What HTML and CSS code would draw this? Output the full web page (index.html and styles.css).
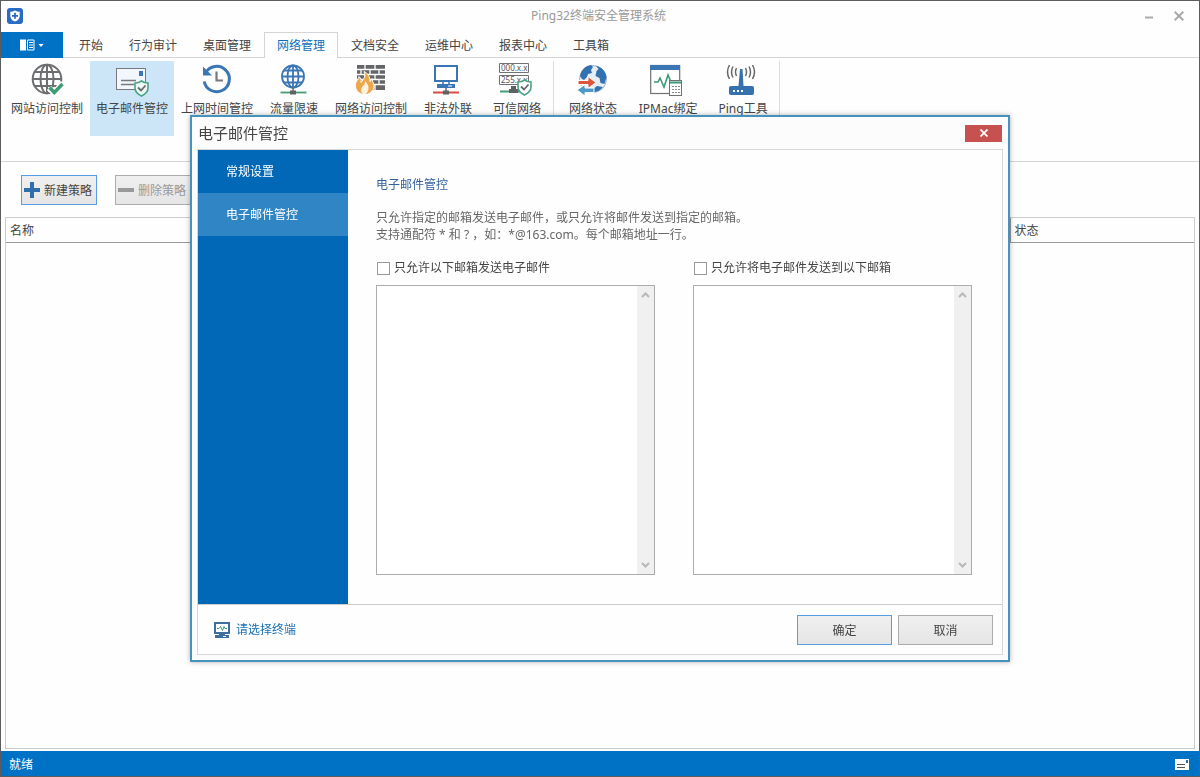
FILE: index.html
```
<!DOCTYPE html>
<html lang="zh-CN">
  <head>
    <meta charset="UTF-8" />
    <meta name="viewport" content="width=device-width, initial-scale=1.0" />
    <title>Ping32终端安全管理系统</title>
    <link rel="stylesheet" href="styles.css">
  </head>
  <body>
    <div class="window">
      <header class="titlebar">
        <svg class="logo" width="16" height="16" viewBox="0 0 16 16">
          <rect width="16" height="16" rx="3" fill="#2a6cc4" />
          <path d="M8 2.500c1.600 1 3 1.200 4.700 1.200v4.300c0 2.700-2 4.500-4.700 5.600-2.700-1.100-4.700-2.900-4.700-5.600V3.700C5 3.700 6.400 3.500 8 2.500z" fill="#fff" />
          <path d="M8 4.800v6M5 7.800h6" stroke="#2a6cc4" stroke-width="1.800" />
        </svg>
        <h1 class="titlebar-text">Ping32终端安全管理系统</h1>
        <div class="titlebar-controls">
          <button type="button" aria-label="最小化">
            <svg width="10" height="10" viewBox="0 0 10 10"><path d="M1 6.500h8" stroke="#aaa" stroke-width="2" /></svg>
          </button>
          <button type="button" aria-label="关闭">
            <svg width="10" height="10" viewBox="0 0 10 10"><path d="M.7.7l8.600 8.600M9.300.7L.7 9.300" stroke="#aaa" stroke-width="2" /></svg>
          </button>
        </div>
      </header>

      <nav class="tabs">
        <button type="button" class="file-menu" aria-label="菜单">
          <svg width="24" height="12" viewBox="0 0 24 12">
            <path d="M0 .5h6v11H0z" fill="#fff" />
            <path d="M7.500 1h6.500v10H7.500z" fill="none" stroke="#fff" />
            <path d="M9 3.500h4M9 6h4M9 8.500h4" stroke="#fff" />
            <path d="M18.500 5h5L21 8z" fill="#fff" />
          </svg>
        </button>
        <a class="tab" href="#">开始</a>
        <a class="tab" href="#">行为审计</a>
        <a class="tab" href="#">桌面管理</a>
        <a class="tab tab-active" href="#">网络管理</a>
        <a class="tab" href="#">文档安全</a>
        <a class="tab" href="#">运维中心</a>
        <a class="tab" href="#">报表中心</a>
        <a class="tab" href="#">工具箱</a>
      </nav>

      <div class="ribbon">
        <div class="ribbon-group">
          <button type="button" class="ribbon-btn">
            <svg viewBox="0 0 36 36" fill="none">
              <g stroke="#6d6e70" stroke-width="2">
                <circle cx="18" cy="17" r="14.300" />
                <ellipse cx="18" cy="17" rx="6.500" ry="14.300" />
                <path d="M18 3v28M4 17h28M6 10h24M6 24h24" />
              </g>
              <path d="M20 26l5 5 9-10" stroke="#fff" stroke-width="6" />
              <path d="M20.500 25.500l4.800 5L33.500 22" stroke="#3a9b74" stroke-width="3.400" />
            </svg>
            <span>网站访问控制</span>
          </button>
          <button type="button" class="ribbon-btn ribbon-btn-active">
            <svg viewBox="0 0 36 36" fill="none">
              <rect x="2.500" y="6.500" width="29" height="21" fill="#f1f7fc" stroke="#77797c" />
              <rect x="25" y="9" width="4" height="5" fill="#3a76b4" />
              <path d="M7 18.500h15M7 22.500h13" stroke="#77797c" stroke-width="1.400" />
              <path d="M27.500 19c2 1.500 4 2 6.500 2v5c0 3.500-2.500 6-6.500 8-4-2-6.500-4.500-6.500-8v-5c2.500 0 4.500-.5 6.500-2z" fill="#eef8f6" stroke="#49a385" stroke-width="1.600" />
              <path d="M24 25.500l3 3 4.500-5" stroke="#66696c" stroke-width="1.800" />
            </svg>
            <span>电子邮件管控</span>
          </button>
          <button type="button" class="ribbon-btn">
            <svg viewBox="0 0 36 36" fill="none">
              <path d="M6.500 11A12.700 12.700 0 1 1 5.200 19.500" stroke="#3a76b4" stroke-width="3" />
              <path d="M4 4.500v9h9z" fill="#3a76b4" />
              <path d="M17.500 9.500v9h6.500" stroke="#77797c" stroke-width="2.200" />
            </svg>
            <span>上网时间管控</span>
          </button>
          <button type="button" class="ribbon-btn">
            <svg viewBox="0 0 36 36" fill="none">
              <g stroke="#3a76b4" stroke-width="1.800">
                <circle cx="17" cy="14.500" r="11" />
                <ellipse cx="17" cy="14.500" rx="5.500" ry="11" />
                <path d="M17 3.500v22M6 14.500h22M8 8.500h18M8 20.500h18" />
              </g>
              <path d="M17 25v5" stroke="#66686a" stroke-width="1.500" />
              <path d="M4.500 30.500h26" stroke="#459c77" stroke-width="1.800" />
              <rect x="14" y="28.500" width="6" height="4" fill="#5f6264" />
            </svg>
            <span>流量限速</span>
          </button>
          <button type="button" class="ribbon-btn">
            <svg viewBox="0 0 36 36" fill="none">
              <rect x="4" y="3" width="28" height="25" fill="#646568" />
              <path d="M4 7.500h28M4 12.500h28M4 17.500h28M4 22.500h28M12 3v4.500M22 3v4.500M8 7.500v5M17 7.500v5M26 7.500v5M12 12.500v5M22 12.500v5M17 17.500v5M26 17.500v5M22 22.500v6" stroke="#fff" stroke-width="1.300" />
              <path d="M10 32.500C4 31 1 26 3 20.500c1-3 3-3 3-6 2 2 2.500 3.500 2 6 3-4 5-6 3-11 4 2 6 5 6 10l2-3c0 4 3 5 2 9-.6 3-4 6-7 7z" fill="#eda74b" stroke="#fff" />
              <path d="M10 32c-3-3-2-6 0-8 2-2 2-3 2-5 4 4 5 9 1 13z" fill="#fff1df" />
            </svg>
            <span>网络访问控制</span>
          </button>
          <button type="button" class="ribbon-btn">
            <svg viewBox="0 0 36 36" fill="none">
              <rect x="5" y="4" width="22" height="15" stroke="#3a76b4" stroke-width="2" />
              <path d="M13 20v4h6v-4" stroke="#3a76b4" stroke-width="1.500" />
              <rect x="7" y="22" width="18" height="4" fill="#3a76b4" />
              <path d="M18 24h4" stroke="#fff" />
              <path d="M16 26v5" stroke="#66686a" stroke-width="1.500" />
              <path d="M3 30.500h26" stroke="#d94b45" stroke-width="2" />
              <rect x="13" y="28.500" width="6" height="4" fill="#5f6264" />
            </svg>
            <span>非法外联</span>
          </button>
          <button type="button" class="ribbon-btn">
            <svg viewBox="0 0 36 36" fill="none">
              <path d="M.5 1.500h29v9H.5zM.5 13.500h29v9H.5z" fill="#fff" stroke="#707274" />
              <text class="ip-text" x="2" y="9">000.x.x</text>
              <text class="ip-text" x="2" y="21">255.x.x</text>
              <path d="M1 29.500h20" stroke="#459c77" stroke-width="2" />
              <path d="M12 24h5v3h2v4h-9v-4h2z" fill="#5f6264" />
              <path d="M25.500 18c2 1.500 4 2 6.500 2v5c0 3.500-2.500 6-6.500 8-4-2-6.500-4.500-6.500-8v-5c2.500 0 4.500-.5 6.500-2z" fill="#fff" stroke="#49a385" stroke-width="1.600" />
              <path d="M22 24.500l3 3 4.500-5" stroke="#66696c" stroke-width="1.800" />
            </svg>
            <span>可信网络</span>
          </button>
        </div>
        <div class="ribbon-group">
          <button type="button" class="ribbon-btn">
            <svg viewBox="0 0 36 36" fill="none">
              <circle cx="18" cy="17" r="13.500" fill="#e5edf5" stroke="#9bb8d6" />
              <path d="M5 14c1-6 5-10 11-11l2 2-2 3 1 3-4 1-1 3-3 3-2-1zM21 4c6 1 10 6 10.500 11l-2 7-4-1-1-5-4-2 1-5 2-2zM17 28l5-4 6 1c-2 3-6 5-10 5.500z" fill="#3471af" />
              <path d="M3 18.500h10v-4l8 6-8 6v-4H3z" fill="#dc563c" stroke="#fff" />
              <path d="M19 30.500h-9V34l-8-6 8-5.500V26h9z" fill="#4d9ac6" stroke="#fff" />
            </svg>
            <span>网络状态</span>
          </button>
          <button type="button" class="ribbon-btn ribbon-btn-wide">
            <svg viewBox="0 0 36 36" fill="none">
              <rect x="0.700" y="3.500" width="29" height="28" fill="#fff" stroke="#6f7173" stroke-width="1.200" />
              <rect y="3" width="30" height="5" fill="#3a76b4" />
              <path d="M4 20h4l2-4 4 9 4-12 3 7h2" stroke="#3a9b74" stroke-width="1.600" />
              <rect x="19.500" y="18.500" width="12" height="15" fill="#fff" stroke="#6f7173" />
              <path d="M20 20.500h11" stroke="#3a9b74" stroke-width="2" />
              <path d="M22 24.500h8M22 27.500h8M22 30.500h8" stroke="#85878a" stroke-dasharray="2 1" />
            </svg>
            <span>IPMac绑定</span>
          </button>
          <button type="button" class="ribbon-btn">
            <svg viewBox="0 0 36 36" fill="none">
              <g stroke="#66686a" stroke-width="1.500">
                <path d="M11.500 6q-2 4 0 8M8 4.500q-3 5.500 0 11M4.500 3q-4 7 0 14M20.500 6q2 4 0 8M24 4.500q3 5.500 0 11M27.500 3q4 7 0 14" />
              </g>
              <path d="M15 7h2.500l1 17h-5z" fill="#3471af" />
              <rect x="4" y="24" width="25" height="9" rx="2" fill="#3471af" />
              <path d="M8 29h2M12 29h2M16 29h2" stroke="#fff" stroke-width="2" />
            </svg>
            <span>Ping工具</span>
          </button>
        </div>
      </div>

      <main class="workspace">
        <div class="toolbar">
          <button type="button" class="tool-btn tool-btn-focus">
            <svg width="16" height="16" viewBox="0 0 16 16"><path d="M8 0v16M0 8h16" stroke="#2f6eab" stroke-width="4" /></svg>
            <span>新建策略</span>
          </button>
          <button type="button" class="tool-btn" disabled>
            <svg width="16" height="16" viewBox="0 0 16 16"><path d="M0 8h16" stroke="#999" stroke-width="4" /></svg>
            <span>删除策略</span>
          </button>
        </div>
        <div class="policy-list">
          <table class="policy-table">
            <thead>
              <tr>
                <th>名称</th>
                <th class="col-status">状态</th>
              </tr>
            </thead>
          </table>
        </div>
      </main>

      <footer class="statusbar">
        <span>就绪</span>
        <svg width="14" height="11" viewBox="0 0 14 11">
          <rect width="14" height="11" fill="#fff" />
          <path d="M2 5.500h8M2 8.500h8" stroke="#555" />
          <rect x="11" y="1" width="2" height="3" fill="#2f6eab" />
        </svg>
      </footer>
    </div>

    <div class="overlay">
      <section class="dialog" role="dialog" aria-labelledby="dialog-title">
        <div class="dialog-titlebar">
          <h2 class="dialog-title" id="dialog-title">电子邮件管控</h2>
          <button type="button" class="dialog-close" aria-label="关闭">
            <svg width="8" height="8" viewBox="0 0 8 8"><path d="M.5.5l7 7M7.500.5l-7 7" stroke="#fff" stroke-width="1.800" /></svg>
          </button>
        </div>
        <div class="dialog-frame">
          <div class="dialog-body">
            <nav class="side-nav">
              <a class="side-link" href="#">常规设置</a>
              <a class="side-link side-link-active" href="#">电子邮件管控</a>
            </nav>
            <div class="settings">
              <h3 class="settings-title">电子邮件管控</h3>
              <p class="settings-hint">
                只允许指定的邮箱发送电子邮件，或只允许将邮件发送到指定的邮箱。<br />
                支持通配符 * 和 ? ，如：*@163.com。每个邮箱地址一行。
              </p>
              <div class="mail-columns">
                <div class="mail-column">
                  <label class="check"><input type="checkbox" />只允许以下邮箱发送电子邮件</label>
                  <div class="mail-box">
                    <textarea aria-label="允许发送的邮箱"></textarea>
                    <div class="scroll-track">
                      <svg width="9" height="6" viewBox="0 0 9 6"><path d="M1 5l3.500-3.500L8 5" /></svg>
                      <svg width="9" height="6" viewBox="0 0 9 6"><path d="M1 1l3.500 3.500L8 1" /></svg>
                    </div>
                  </div>
                </div>
                <div class="mail-column">
                  <label class="check"><input type="checkbox" />只允许将电子邮件发送到以下邮箱</label>
                  <div class="mail-box">
                    <textarea aria-label="允许接收的邮箱"></textarea>
                    <div class="scroll-track">
                      <svg width="9" height="6" viewBox="0 0 9 6"><path d="M1 5l3.500-3.500L8 5" /></svg>
                      <svg width="9" height="6" viewBox="0 0 9 6"><path d="M1 1l3.500 3.500L8 1" /></svg>
                    </div>
                  </div>
                </div>
              </div>
            </div>
          </div>
          <div class="dialog-footer">
            <a class="pick-terminal" href="#">
              <svg width="16" height="16" viewBox="0 0 16 16" fill="none">
                <rect x="1" y="1" width="14" height="10" fill="#fff" stroke="#3f6d9e" stroke-width="2" />
                <path d="M3 6.500h2l1.500-2 2 4 1.500-4 1 2h2" stroke="#3f9a75" />
                <path d="M5 12h6v1H5z" fill="#3f6d9e" />
                <path d="M1 13h14v3H1z" fill="#3f6d9e" />
                <path d="M9 14.500h3" stroke="#fff" />
              </svg>
              请选择终端
            </a>
            <button type="button" class="dialog-btn dialog-btn-default">确定</button>
            <button type="button" class="dialog-btn">取消</button>
          </div>
        </div>
      </section>
    </div>
  </body>
</html>
```

FILE: styles.css
```
* {
  box-sizing: border-box;
}
body {
  margin: 0;
  font-family: "Noto Sans", "Noto Sans CJK SC", sans-serif;
  font-size: 12px;
  line-height: 18px;
  color: #444;
}
h1,
h2,
h3,
p {
  margin: 0;
  font-weight: normal;
}
a {
  color: inherit;
  text-decoration: none;
}
button {
  padding: 0;
  border: 0;
  background: none;
  color: inherit;
  font: inherit;
}
svg {
  display: block;
}

.window {
  display: flex;
  flex-direction: column;
  min-height: 100vh;
  border: 1px solid #5c5c5e;
  background: #fefefe;
}

/* title bar */
.titlebar {
  display: grid;
  grid-template-columns: 1fr auto 1fr;
  align-items: center;
  height: 31px;
  padding: 0 15px 1px 6px;
}
.titlebar-text {
  padding-left: 6px;
  font-size: 12px;
  color: #999;
}
.titlebar-controls {
  display: flex;
  justify-content: flex-end;
  gap: 20px;
}

/* tabs */
.tabs {
  display: flex;
  height: 26px;
  border-bottom: 1px solid #d5d5d5;
}
.file-menu {
  display: flex;
  align-items: center;
  justify-content: center;
  width: 62px;
  height: 26px;
  margin-right: 3px;
  background: #0072c6;
}
.tab {
  height: 26px;
  padding: 4px 12px 0;
  border: 1px solid transparent;
  border-bottom: 0;
}
.tab-active {
  border-color: #d5d5d5;
  background: #fefefe;
  color: #0f70b8;
}

/* ribbon */
.ribbon {
  display: flex;
  height: 104px;
  padding: 3px 4px;
  border-bottom: 1px solid #d5d5d5;
}
.ribbon-group {
  display: flex;
  gap: 1px;
  height: 54px;
  padding-right: 2px;
  margin-right: 5px;
  border-right: 1px solid #dcdcdc;
}
.ribbon-btn {
  display: flex;
  flex-direction: column;
  align-items: center;
  gap: 2px;
  min-width: 68px;
  height: 75px;
  padding: 1px 6px;
  white-space: nowrap;
}
.ribbon-btn svg {
  width: 36px;
  height: 36px;
}
.ribbon-btn-wide {
  min-width: 80px;
}
.ribbon-btn-active {
  background: #cde6f7;
}
.ip-text {
  fill: #555;
  font-size: 8px;
}

/* policy list */
.workspace {
  display: flex;
  flex: 1;
  flex-direction: column;
  padding: 13px 4px 2px;
}
.toolbar {
  display: flex;
  gap: 18px;
  padding: 0 16px 12px;
}
.tool-btn {
  display: flex;
  align-items: center;
  gap: 4px;
  height: 30px;
  padding: 0 4px 0 2px;
  border: 1px solid #acacac;
  background: linear-gradient(#f0f0f0, #e5e5e5);
}
.tool-btn span {
  padding-top: 2px;
}
.tool-btn-focus {
  border-color: #569de5;
}
.tool-btn:disabled {
  color: #999;
}
.policy-list {
  flex: 1;
  border: 1px solid #ccc;
}
.policy-table {
  width: 100%;
  border-collapse: collapse;
}
.policy-table th {
  height: 24px;
  padding: 2px 4px 0;
  border-bottom: 1px solid #999;
  font-weight: normal;
  text-align: left;
}
.policy-table .col-status {
  width: 184px;
  border-left: 1px solid #999;
}

/* status bar */
.statusbar {
  display: flex;
  align-items: center;
  justify-content: space-between;
  height: 25px;
  padding: 2px 10px 0 8px;
  background: #0072c6;
  color: #fff;
}

/* dialog */
.overlay {
  position: fixed;
  inset: 0;
  display: flex;
  align-items: center;
  justify-content: center;
}
.dialog {
  width: 820px;
  max-width: 100%;
  border: 2px solid #4592bd;
  background: #fcfcfc;
  box-shadow: 0 0 5px rgba(0, 0, 0, 0.3);
}
.dialog-titlebar {
  display: flex;
  align-items: center;
  justify-content: space-between;
  height: 32px;
  padding: 0 6px;
}
.dialog-title {
  font-size: 15px;
}
.dialog-close {
  display: flex;
  align-items: center;
  justify-content: center;
  width: 37px;
  height: 17px;
  background: #c75050;
}
.dialog-frame {
  margin: 0 5px 5px;
  border: 1px solid #d4d8da;
  background: #fefefe;
}
.dialog-body {
  display: flex;
}
.side-nav {
  width: 150px;
  background: #0068b7;
  color: #fff;
}
.side-link {
  display: block;
  padding: 13px 28px 12px;
}
.side-link-active {
  background: #3086c5;
}
.settings {
  flex: 1;
  padding: 26px 30px 29px 28px;
}
.settings-title {
  font-size: 12px;
  color: #3462a0;
}
.settings-hint {
  margin: 15px 0 16px;
  line-height: 17px;
  color: #666;
}
.mail-columns {
  display: grid;
  grid-template-columns: 1fr 1fr;
  gap: 38px;
}
.check {
  display: flex;
  align-items: center;
  gap: 4px;
}
.check input {
  width: 13px;
  height: 13px;
  margin: 0 0 0 1px;
  border: 1px solid #999;
  background: #fff;
  appearance: none;
}
.check input:checked {
  background: #0072c6;
}
.mail-box {
  display: flex;
  height: 290px;
  margin-top: 8px;
  border: 1px solid #acacac;
}
.mail-box textarea {
  flex: 1;
  min-width: 0;
  padding: 4px;
  border: 0;
  outline: 0;
  background: #fff;
  font: inherit;
  resize: none;
}
.scroll-track {
  display: flex;
  flex-direction: column;
  justify-content: space-between;
  align-items: center;
  width: 17px;
  padding: 6px 0;
  background: #f0f0f0;
}
.scroll-track path {
  fill: none;
  stroke: #b8b8b8;
  stroke-width: 2;
}
.dialog-footer {
  display: flex;
  align-items: center;
  gap: 6px;
  height: 50px;
  padding: 0 9px 0 16px;
  border-top: 1px solid #ccc;
}
.pick-terminal {
  display: flex;
  align-items: center;
  gap: 6px;
  margin-right: auto;
  color: #1a6fb5;
}
.dialog-btn {
  width: 95px;
  height: 30px;
  padding-top: 2px;
  border: 1px solid #acacac;
  background: linear-gradient(#f0f0f0, #e5e5e5);
}
.dialog-btn-default {
  border-color: #569de5;
}
```
